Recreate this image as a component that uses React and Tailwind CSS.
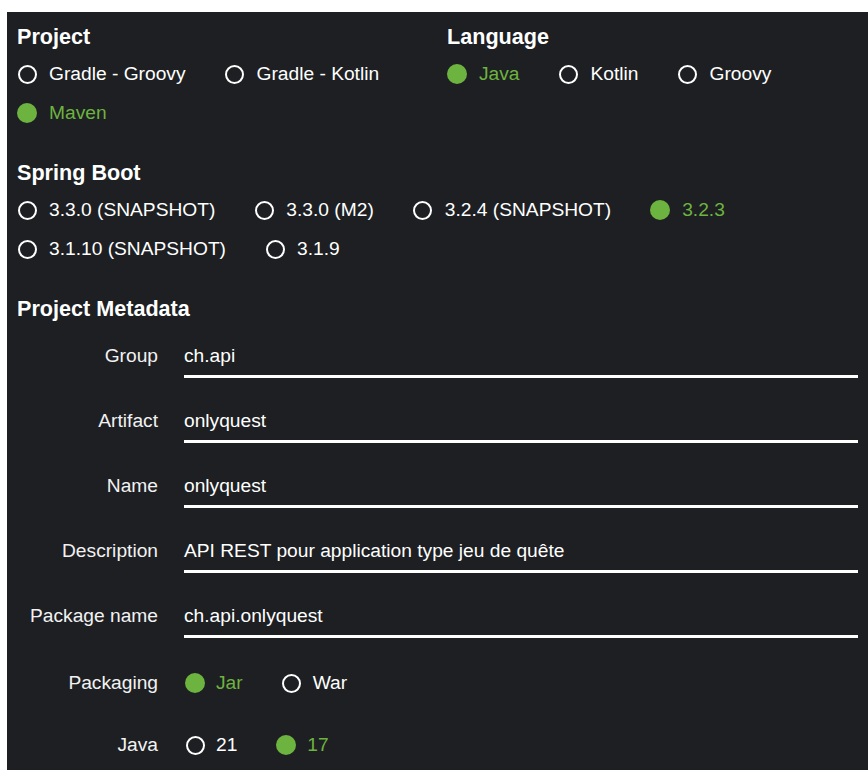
import React from "react";

function Dot({ checked }) {
  if (checked) {
    return <span className="block w-5 h-5 rounded-full bg-[#6db33f] shrink-0" />;
  }
  return (
    <span className="flex w-5 h-5 items-center justify-center shrink-0">
      <span className="block w-[19px] h-[19px] rounded-full border-[2.8px] border-white" />
    </span>
  );
}

function Radio({ label, checked, gap = "gap-3" }) {
  return (
    <div className={`flex items-center h-[26px] ${gap}`}>
      <Dot checked={checked} />
      <span className={checked ? "text-[#6db33f]" : "text-white"}>{label}</span>
    </div>
  );
}

function Title({ children }) {
  return <div className="text-[21.6px] font-bold leading-[26px] text-white">{children}</div>;
}

function Field({ label, value }) {
  return (
    <div className="flex">
      <div className="w-[141px] shrink-0 text-right leading-[26px] text-[#f2f2f2]">{label}</div>
      <div className="ml-[26px] flex-1 border-b-[3px] border-white pb-[6px] leading-[26px] text-white">
        {value}
      </div>
    </div>
  );
}

function RadioField({ label, options, className }) {
  return (
    <div className={`flex ${className}`}>
      <div className="w-[141px] shrink-0 text-right leading-[26px] text-[#f2f2f2]">{label}</div>
      <div className="ml-[27px] flex gap-x-[39px]">
        {options.map((o) => (
          <Radio key={o.label} label={o.label} checked={o.checked} gap="gap-[11px]" />
        ))}
      </div>
    </div>
  );
}

export default function App() {
  return (
    <div className="w-[868px] h-[770px] bg-white pl-[7px] pt-[12px] font-['Liberation_Sans',Arial,sans-serif] text-[19.2px]">
      <div className="h-[758px] bg-[#1d1f23] pl-[10px] pr-[10px] pt-[12px]">
        {/* Project / Language */}
        <div className="flex">
          <div className="w-[430px] shrink-0">
            <Title>Project</Title>
            <div className="mt-[11px] flex flex-wrap gap-x-[39px] gap-y-[13px]">
              <Radio label="Gradle - Groovy" />
              <Radio label="Gradle - Kotlin" />
              <Radio label="Maven" checked />
            </div>
          </div>
          <div className="flex-1">
            <Title>Language</Title>
            <div className="mt-[11px] flex flex-wrap gap-x-[39px] gap-y-[13px]">
              <Radio label="Java" checked />
              <Radio label="Kotlin" />
              <Radio label="Groovy" />
            </div>
          </div>
        </div>

        {/* Spring Boot */}
        <div className="mt-[34px]">
          <Title>Spring Boot</Title>
          <div className="mt-[11px] flex flex-wrap gap-x-[39px] gap-y-[13px]">
            <Radio label="3.3.0 (SNAPSHOT)" />
            <Radio label="3.3.0 (M2)" />
            <Radio label="3.2.4 (SNAPSHOT)" />
            <Radio label="3.2.3" checked />
            <Radio label="3.1.10 (SNAPSHOT)" />
            <Radio label="3.1.9" />
          </div>
        </div>

        {/* Project Metadata */}
        <div className="mt-[34px]">
          <Title>Project Metadata</Title>
          <div className="mt-[21px] flex flex-col gap-[30px]">
            <Field label="Group" value="ch.api" />
            <Field label="Artifact" value="onlyquest" />
            <Field label="Name" value="onlyquest" />
            <Field label="Description" value="API REST pour application type jeu de quête" />
            <Field label="Package name" value="ch.api.onlyquest" />
          </div>
          <RadioField
            className="mt-[32px]"
            label="Packaging"
            options={[
              { label: "Jar", checked: true },
              { label: "War", checked: false },
            ]}
          />
          <RadioField
            className="mt-[36px]"
            label="Java"
            options={[
              { label: "21", checked: false },
              { label: "17", checked: true },
            ]}
          />
        </div>
      </div>
    </div>
  );
}
